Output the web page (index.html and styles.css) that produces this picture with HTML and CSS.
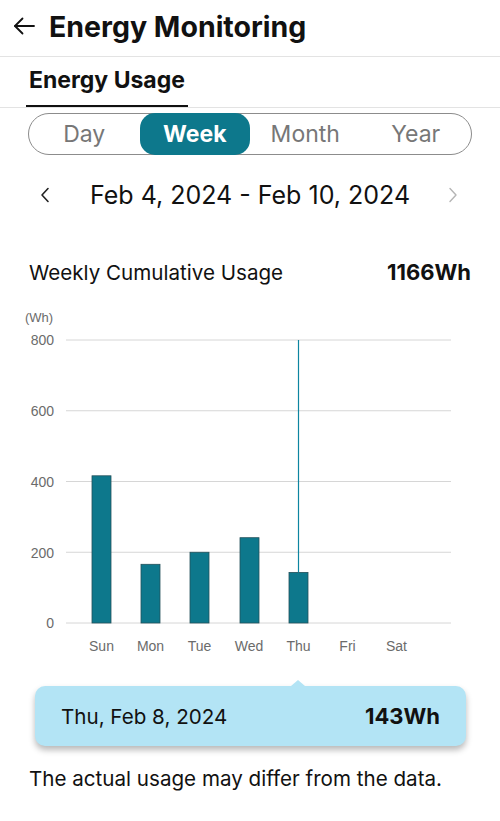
FILE: index.html
```html
<!DOCTYPE html>
<html lang="en">
<head>
    <meta charset="UTF-8">
    <meta name="viewport" content="width=device-width, initial-scale=1.0">
    <title>Energy Monitoring</title>
    <link rel="stylesheet" href="styles.css">
</head>
<body>
    <header class="topbar">
        <button class="back-btn" aria-label="Back">
            <svg width="22" height="18" viewBox="0 0 22 18" fill="none" stroke="#111" stroke-width="1.8" stroke-linecap="round" stroke-linejoin="round">
                <path d="M21 9H2"/>
                <path d="M9.5 1.5L2 9l7.5 7.5"/>
            </svg>
        </button>
        <h1>Energy Monitoring</h1>
    </header>

    <nav class="tabs">
        <a class="tab active">Energy Usage</a>
    </nav>

    <div class="segments">
        <button class="seg">Day</button>
        <button class="seg active">Week</button>
        <button class="seg">Month</button>
        <button class="seg">Year</button>
    </div>

    <div class="date-nav">
        <button class="arrow">
            <svg width="10" height="16" viewBox="0 0 10 16" fill="none" stroke="#222" stroke-width="1.6" stroke-linecap="round" stroke-linejoin="round"><path d="M8 1.5L2 8l6 6.5"/></svg>
        </button>
        <span class="range">Feb 4, 2024 - Feb 10, 2024</span>
        <button class="arrow disabled">
            <svg width="10" height="16" viewBox="0 0 10 16" fill="none" stroke="#b5b5b5" stroke-width="1.4" stroke-linecap="round" stroke-linejoin="round"><path d="M2 1.5L8 8l-6 6.5"/></svg>
        </button>
    </div>

    <div class="summary">
        <span>Weekly Cumulative Usage</span>
        <strong>1166Wh</strong>
    </div>

    <svg class="chart" width="500" height="360" viewBox="0 0 500 360">
        <text class="unit" x="25" y="17">(Wh)</text>

        <!-- grid -->
        <g stroke="#d6d6d6" stroke-width="1">
            <line x1="66" x2="451" y1="35" y2="35"/>
            <line x1="66" x2="451" y1="105.75" y2="105.75"/>
            <line x1="66" x2="451" y1="176.5" y2="176.5"/>
            <line x1="66" x2="451" y1="247.25" y2="247.25"/>
            <line x1="66" x2="451" y1="318" y2="318"/>
        </g>
        <g class="ylabels" text-anchor="end">
            <text x="54" y="40">800</text>
            <text x="54" y="111">600</text>
            <text x="54" y="181.5">400</text>
            <text x="54" y="252.5">200</text>
            <text x="54" y="323">0</text>
        </g>

        <!-- bars: 800Wh = 283px -->
        <g fill="#0d788c" stroke="#24505a" stroke-width="0.8">
            <rect x="92" y="170.8" width="19" height="147.2"/>
            <rect x="141" y="259.3" width="19" height="58.7"/>
            <rect x="190" y="247.25" width="19" height="70.75"/>
            <rect x="240" y="232.7" width="19" height="85.3"/>
            <rect x="289" y="267.4" width="19" height="50.6"/>
        </g>
        <line x1="298.5" x2="298.5" y1="35" y2="267.4" stroke="#0d85a0" stroke-width="1.2"/>

        <g class="xlabels" text-anchor="middle">
            <text x="101.5" y="346">Sun</text>
            <text x="150.5" y="346">Mon</text>
            <text x="199.5" y="346">Tue</text>
            <text x="249" y="346">Wed</text>
            <text x="298.5" y="346">Thu</text>
            <text x="347.5" y="346">Fri</text>
            <text x="396.5" y="346">Sat</text>
        </g>
    </svg>

    <div class="tooltip">
        <span>Thu, Feb 8, 2024</span>
        <strong>143Wh</strong>
    </div>

    <p class="note">The actual usage may differ from the data.</p>
</body>
</html>
```

FILE: styles.css
```css
*{
    margin: 0;
    padding: 0;
    box-sizing: border-box;
}
body{
    width: 500px;
    min-height: 821px;
    background: #fff;
    color: #111;
    font-family: "Inter", "Liberation Sans", sans-serif;
}
button{
    background: none;
    border: none;
    font-family: inherit;
    cursor: pointer;
}
.topbar{
    height: 57px;
    display: flex;
    align-items: center;
    padding: 0 0 4px 13px;
    border-bottom: 1px solid #e3e3e3;
}
.back-btn{
    display: flex;
    width: 22px;
    margin-right: 14px;
}
.topbar h1{
    font-size: 28.5px;
    font-weight: 700;
}
.tabs{
    height: 51px;
    padding-left: 26px;
    display: flex;
    border-bottom: 1px solid #e3e3e3;
}
.tab{
    width: 162px;
    display: flex;
    align-items: center;
    justify-content: center;
    font-size: 23px;
    font-weight: 700;
    border-bottom: 2px solid #111;
    padding-bottom: 2px;
}
.segments{
    margin: 5px 28px 0;
    height: 42px;
    border: 1px solid #8c8c8c;
    border-radius: 21px;
    display: grid;
    grid-template-columns: repeat(4, 1fr);
}
.seg{
    font-size: 23px;
    color: #777;
    border-radius: 15px;
    margin: -1px 0;
}
.seg.active{
    background: #0d788c;
    color: #fff;
    font-weight: 700;
}
.date-nav{
    height: 80px;
    display: flex;
    align-items: center;
    justify-content: space-between;
    padding: 0 40px 0 40px;
}
.arrow{
    display: flex;
    width: 12px;
}
.range{
    font-size: 25px;
}
.summary{
    margin-top: 22px;
    height: 30px;
    display: flex;
    align-items: center;
    justify-content: space-between;
    padding: 0 29px;
    font-size: 20.6px;
}
.summary strong{
    font-size: 22px;
    font-weight: 700;
}
.chart{
    display: block;
    margin-top: 18px;
}
.chart text{
    font-family: "Liberation Sans", sans-serif;
    fill: #6b6b6b;
}
.chart .unit{
    font-size: 13px;
}
.ylabels text, .xlabels text{
    font-size: 14px;
}
.tooltip{
    position: relative;
    margin: 21px 34px 0 35px;
    height: 60px;
    background: #b3e4f5;
    border-radius: 10px;
    box-shadow: 0 4px 6px rgba(0, 0, 0, 0.28);
    display: flex;
    align-items: center;
    justify-content: space-between;
    padding: 0 26px;
    font-size: 20.6px;
}
.tooltip::before{
    content: "";
    position: absolute;
    top: -6px;
    left: 256px;
    border-left: 7px solid transparent;
    border-right: 7px solid transparent;
    border-bottom: 6px solid #b3e4f5;
}
.tooltip strong{
    font-size: 22px;
    font-weight: 700;
}
.note{
    margin: 20px 29px 0;
    font-size: 20.6px;
    line-height: 26px;
}
```
